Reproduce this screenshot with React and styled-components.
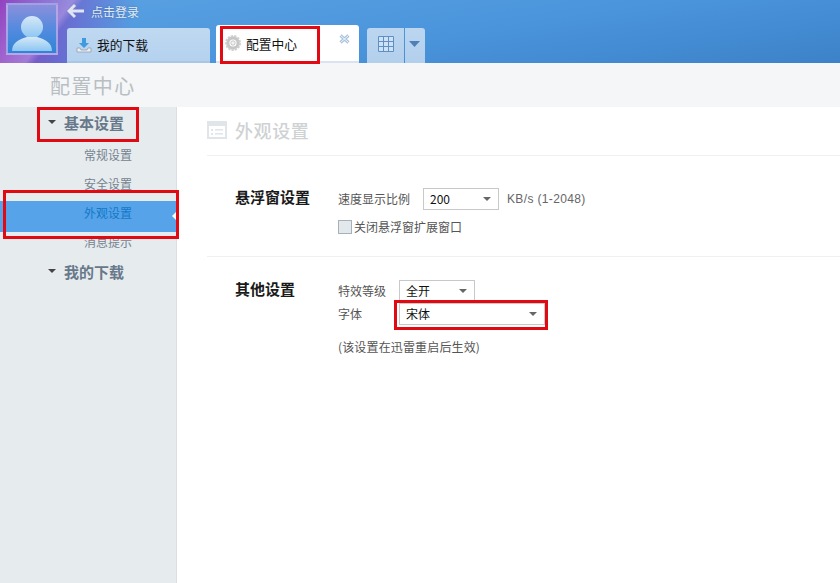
import React from 'react';
import styled, { createGlobalStyle } from 'styled-components';

const GlobalStyle = createGlobalStyle`
    html, body {
        margin: 0;
        padding: 0;
        background: #fff;
        overflow: hidden;
    }
    body {
        font-family: "Noto Sans CJK SC", "Liberation Sans", sans-serif;
        font-size: 12px;
        color: #555;
    }
`;

const Page = styled.div`
    position: relative;
    width: 840px;
    height: 583px;
    display: flex;
    flex-direction: column;
    overflow: hidden;
`;

const Header = styled.header`
    height: 63px;
    flex: none;
    display: flex;
    padding-left: 6px;
    box-sizing: border-box;
    background:
        linear-gradient(128deg, rgba(170, 70, 190, 0) 0, rgba(235, 190, 240, 0.35) 58px, rgba(170, 70, 190, 0) 66px),
        linear-gradient(100deg, rgba(150, 60, 190, 0.95) 0, rgba(120, 80, 200, 0.75) 55px, rgba(76, 130, 210, 0) 135px),
        linear-gradient(172deg, #5aa2e2 0, #4a94dc 55%, #3c82c8 100%);
`;

const Avatar = styled.div`
    width: 52px;
    height: 52px;
    margin-top: 3px;
    flex: none;
    box-sizing: border-box;
    border: 2px solid rgba(205, 175, 235, 0.7);
    background: linear-gradient(180deg, #8a8fdc 0, #4f8ade 55%, #2f84d8 100%);
    overflow: hidden;

    svg {
        display: block;
    }
`;

const HeaderMain = styled.div`
    margin-left: 9px;
    display: flex;
    flex-direction: column;
`;

const LoginRow = styled.div`
    height: 22px;
    margin-bottom: 3px;
    display: flex;
    align-items: center;
    gap: 6px;
    color: #e2ecf6;
    text-shadow: 0 0 2px #3f6fa8;
`;

const TabBar = styled.div`
    flex: 1;
    display: flex;
    align-items: flex-end;
`;

const Tab = styled.div`
    box-sizing: border-box;
    width: 143px;
    height: ${p => (p.$active ? 38 : 35)}px;
    margin-right: ${p => (p.$active ? 8 : 6)}px;
    padding-left: 9px;
    display: flex;
    align-items: center;
    gap: 5px;
    position: relative;
    border-radius: 3px 3px 0 0;
    font-size: 12.75px;
    color: #111;
    background: ${p => (p.$active ? '#fff' : 'linear-gradient(180deg, #c0d9f1, #b4d1ee)')};
    border-bottom: ${p => (p.$active ? '2px solid #dbe4ee' : '2px solid #a9c6e4')};
`;

const TabClose = styled.span`
    position: absolute;
    top: 9px;
    right: 9px;
    line-height: 0;
`;

const ToolButton = styled.div`
    box-sizing: border-box;
    height: 35px;
    width: ${p => p.$width}px;
    margin-right: 1px;
    display: flex;
    align-items: center;
    justify-content: center;
    background: linear-gradient(180deg, #bcd6f0, #b2cfec);
    border-radius: ${p => p.$radius};
    padding-bottom: 3px;
`;

const TitleBar = styled.div`
    height: 44px;
    flex: none;
    box-sizing: border-box;
    padding-left: 50px;
    display: flex;
    align-items: center;
    background: #f4f6f8;
    font-size: 20px;
    letter-spacing: 1.4px;
    color: #b9bec2;
`;

const Content = styled.div`
    flex: 1;
    display: flex;
    min-height: 0;
`;

const Sidebar = styled.nav`
    width: 177px;
    flex: none;
    box-sizing: border-box;
    background: #e6ebee;
    border-right: 1px solid #d8e0e5;
`;

const Group = styled.div`
    box-sizing: border-box;
    height: ${p => p.$height}px;
    padding: 0 0 3px 48px;
    display: flex;
    align-items: center;
    gap: 8px;
    font-size: 15px;
    font-weight: 700;
    color: #67788a;
`;

const Caret = styled.span`
    width: 0;
    height: 0;
    border-left: 4px solid transparent;
    border-right: 4px solid transparent;
    border-top: 4px solid #444;
    margin-bottom: 1px;
`;

const NavItem = styled.div`
    padding-left: 84px;
    height: 29px;
    line-height: 29px;
    color: #75838f;
`;

const ActiveItem = styled.div`
    position: relative;
    height: 31px;
    margin: 3px -1px -5px 0;
    padding-left: 84px;
    line-height: 23px;
    background: #56a3ea;
    color: #1478c8;

    &::after {
        content: '';
        position: absolute;
        right: 0;
        top: 10px;
        border-top: 5px solid transparent;
        border-bottom: 5px solid transparent;
        border-right: 5px solid #fff;
    }
`;

const Main = styled.main`
    flex: 1;
    margin-left: 30px;
    min-width: 0;
`;

const MainHead = styled.div`
    height: 49px;
    box-sizing: border-box;
    padding-bottom: 3px;
    display: flex;
    align-items: center;
    gap: 8px;
    border-bottom: 1px solid #eef0f2;
    font-size: 18px;
    font-weight: 500;
    letter-spacing: 0.6px;
    color: #cfd2d4;
`;

const Section = styled.section`
    display: flex;
    padding: ${p => p.$padding};
    border-bottom: ${p => (p.$last ? 'none' : '1px solid #eef0f2')};
`;

const SectionLabel = styled.div`
    width: 103px;
    margin-left: 28px;
    flex: none;
    font-size: 15px;
    font-weight: 700;
    line-height: 18px;
    color: #1a1a1a;
`;

const Fields = styled.div`
    display: flex;
    flex-direction: column;
`;

const Row = styled.div`
    display: flex;
    align-items: center;
    height: 22px;
    margin-bottom: ${p => p.$mb || 0}px;
`;

const FieldName = styled.span`
    width: ${p => p.$width}px;
    flex: none;
    color: #555;
    line-height: 18px;
`;

const Select = styled.div`
    box-sizing: border-box;
    width: ${p => p.$width}px;
    height: 22px;
    padding: 0 6px;
    display: flex;
    align-items: center;
    justify-content: space-between;
    line-height: 18px;
    background: #fff;
    border: 1px solid #c8c8c8;
    color: #111;
`;

const SelectArrow = styled.span`
    width: 0;
    height: 0;
    margin-right: 1px;
    border-left: 4px solid transparent;
    border-right: 4px solid transparent;
    border-top: 4px solid #666;
`;

const Unit = styled.span`
    margin-left: 8px;
    font-family: "Liberation Sans", sans-serif;
    font-size: 12px;
    letter-spacing: 0.35px;
    color: #666;
`;

const CheckRow = styled.label`
    height: 14px;
    display: flex;
    align-items: center;
    gap: 2px;
    line-height: 12px;
    color: #555;
`;

const CheckBox = styled.span`
    box-sizing: border-box;
    width: 14px;
    height: 14px;
    background: #e3e8ec;
    border: 1px solid #a9b1b8;
`;

const Note = styled.div`
    margin-top: 13px;
    line-height: 18px;
    letter-spacing: 0.15px;
    color: #555;
`;

const Annotation = styled.div`
    position: absolute;
    box-sizing: border-box;
    left: ${p => p.$x}px;
    top: ${p => p.$y}px;
    width: ${p => p.$w}px;
    height: ${p => p.$h}px;
    border: 3px solid #e20a12;
    pointer-events: none;
`;

const AvatarIcon = () => (
    <svg width="48" height="48" viewBox="0 0 48 48">
        <defs>
            <linearGradient id="person" x1="0" y1="0" x2="0" y2="1">
                <stop offset="0" stopColor="#d5e8f8" />
                <stop offset="1" stopColor="#8cc6f2" />
            </linearGradient>
        </defs>
        <circle cx="24" cy="22" r="11" fill="url(#person)" />
        <path d="M4 46c0-9 8-12 15-14h10c7 2 15 5 15 14z" fill="url(#person)" />
    </svg>
);

const BackArrow = () => (
    <svg width="18" height="16" viewBox="0 0 18 16">
        <path d="M8 2 2 8l6 6M2 8h15" fill="none" stroke="#dfe6ee" strokeWidth="3" />
    </svg>
);

const DownloadIcon = () => (
    <svg width="16" height="16" viewBox="0 0 16 16">
        <path d="M6 1h4v5h3L8 11 3 6h3z" fill="#3f9be0" />
        <path d="M1 11h3l1 2h6l1-2h3v4H1z" fill="#e8eef2" stroke="#8a98a4" strokeWidth="0.7" />
    </svg>
);

const GearIcon = () => (
    <svg width="16" height="16" viewBox="0 0 16 16">
        <circle cx="8" cy="8" r="5.2" fill="none" stroke="#c6c6c6" strokeWidth="3.2" />
        <circle cx="8" cy="8" r="7" fill="none" stroke="#d0d0d0" strokeWidth="2" strokeDasharray="2.2 1.2" />
        <circle cx="8" cy="8" r="2.2" fill="#f2f2f2" stroke="#a8a8a8" strokeWidth="0.6" />
    </svg>
);

const CloseIcon = () => (
    <svg width="11" height="10" viewBox="0 0 11 10">
        <path d="M1.5 1.5 9.5 8.5M9.5 1.5 1.5 8.5" stroke="#a9c3dc" strokeWidth="3" />
        <path d="M1.5 1.5 9.5 8.5M9.5 1.5 1.5 8.5" stroke="#f2f6fa" strokeWidth="1" />
    </svg>
);

const GridIcon = () => (
    <svg width="16" height="16" viewBox="0 0 16 16">
        <path d="M.5.5h15v15H.5zM5.5.5v15M10.5.5v15M.5 5.5h15M.5 10.5h15" fill="#cfe1f4" stroke="#5f8fc4" />
    </svg>
);

const DownTriangle = () => (
    <svg width="12" height="6" viewBox="0 0 12 6">
        <path d="M0 0h11L5.5 6z" fill="#4f7fb8" />
    </svg>
);

const ListIcon = () => (
    <svg width="20" height="18" viewBox="0 0 20 18">
        <rect x="0" y="0" width="20" height="18" fill="#dfe5e9" />
        <rect x="2" y="5" width="16" height="11" fill="#fff" />
        <path d="M4 8h2v2H4zM4 12h2v2H4zM8 8h8v1.5H8zM8 12h8v1.5H8z" fill="#dfe5e9" />
    </svg>
);

const App = () => (
    <Page>
        <GlobalStyle />
        <Header>
            <Avatar><AvatarIcon /></Avatar>
            <HeaderMain>
                <LoginRow><BackArrow />点击登录</LoginRow>
                <TabBar>
                    <Tab><DownloadIcon />我的下载</Tab>
                    <Tab $active>
                        <GearIcon />配置中心
                        <TabClose><CloseIcon /></TabClose>
                    </Tab>
                    <ToolButton $width={37} $radius="3px 0 0 0"><GridIcon /></ToolButton>
                    <ToolButton $width={20} $radius="0 3px 0 0"><DownTriangle /></ToolButton>
                </TabBar>
            </HeaderMain>
        </Header>
        <TitleBar>配置中心</TitleBar>
        <Content>
            <Sidebar>
                <Group $height={33}><Caret />基本设置</Group>
                <NavItem>常规设置</NavItem>
                <NavItem>安全设置</NavItem>
                <ActiveItem>外观设置</ActiveItem>
                <NavItem>消息提示</NavItem>
                <Group $height={34}><Caret />我的下载</Group>
            </Sidebar>
            <Main>
                <MainHead><ListIcon />外观设置</MainHead>
                <Section $padding="32px 0 22px">
                    <SectionLabel>悬浮窗设置</SectionLabel>
                    <Fields>
                        <Row $mb={10}>
                            <FieldName $width={85}>速度显示比例</FieldName>
                            <Select $width={76}>200<SelectArrow /></Select>
                            <Unit>KB/s (1-2048)</Unit>
                        </Row>
                        <CheckRow><CheckBox />关闭悬浮窗扩展窗口</CheckRow>
                    </Fields>
                </Section>
                <Section $last $padding="23px 0 0">
                    <SectionLabel>其他设置</SectionLabel>
                    <Fields>
                        <Row $mb={1}>
                            <FieldName $width={61}>特效等级</FieldName>
                            <Select $width={76}>全开<SelectArrow /></Select>
                        </Row>
                        <Row>
                            <FieldName $width={61}>字体</FieldName>
                            <Select $width={146}>宋体<SelectArrow /></Select>
                        </Row>
                        <Note>(该设置在迅雷重启后生效)</Note>
                    </Fields>
                </Section>
            </Main>
        </Content>
        <Annotation $x={37} $y={107} $w={102} $h={35} />
        <Annotation $x={220} $y={26} $w={100} $h={38} />
        <Annotation $x={3} $y={190} $w={176} $h={49} />
        <Annotation $x={394} $y={300} $w={154} $h={30} />
    </Page>
);

export default App;
